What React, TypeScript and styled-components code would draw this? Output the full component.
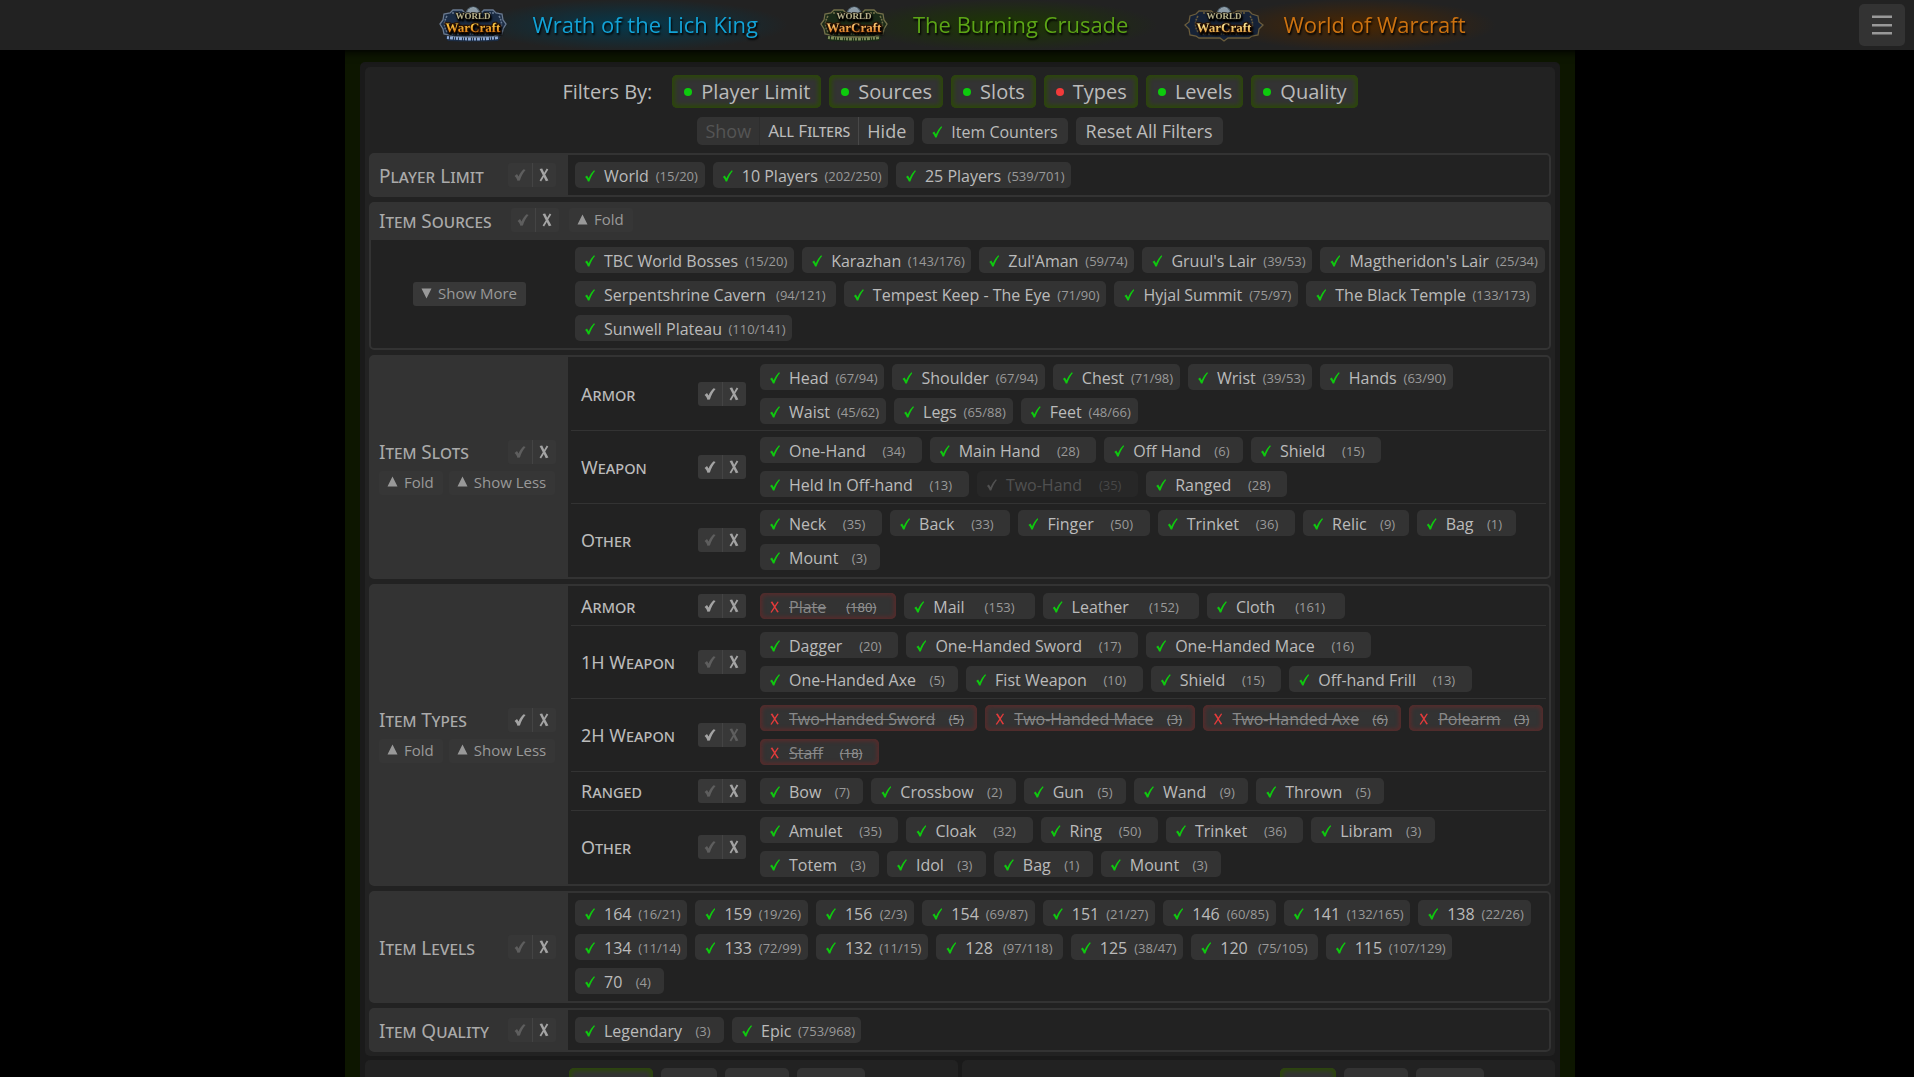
import React, { useState } from 'react';
import styled, { createGlobalStyle, css } from 'styled-components';

const GlobalStyle = createGlobalStyle`
  *, *::before, *::after { box-sizing: border-box; }
  body {
    margin: 0;
    background: #000;
    color: #bbb;
    font-family: "Open Sans", "Noto Sans", sans-serif;
    font-size: 16px;
    line-height: 24px;
  }
  button { font: inherit; color: inherit; border: 0; cursor: pointer; }
`;

const Page = styled.div`
  height: 100vh;
  overflow: auto;
  scrollbar-width: none;
`;

/* ---------- top bar ---------- */

const TopBar = styled.header`
  position: sticky;
  top: 0;
  z-index: 2;
  display: flex;
  align-items: center;
  height: 50px;
  padding-right: 9px;
  background: #222;
  box-shadow: 0 2px 8px #000;
`;

const Games = styled.nav`
  flex: 1;
  display: flex;
  justify-content: center;
  gap: 26px;
  padding-left: 70px;
`;

const GameLink = styled.a<{ $color: string; $glow: string }>`
  display: flex;
  align-items: center;
  gap: 19px;
  height: 50px;
  padding: 0 30px 2px 0;
  color: ${p => p.$color};
  font-size: 22px;
  line-height: 48px;
  text-decoration: none;
  text-shadow: 1px 2px 2px #000;
  white-space: nowrap;
  background: radial-gradient(ellipse 44% 52% at 56% 50%, ${p => p.$glow} 0%, transparent 100%);
`;

const MenuButton = styled.button`
  display: grid;
  place-items: center;
  width: 46px;
  height: 42px;
  padding: 0;
  border-radius: 5px;
  background: #333;
  color: #999;
`;

/* ---------- page body ---------- */

const Stage = styled.div`
  padding-left: 6px;
`;

const Backdrop = styled.main`
  max-width: 1230px;
  margin: 0 auto;
  padding: 12px 15px 0;
  background: #0d1600;
`;

const Sheet = styled.div`
  display: flex;
  flex-direction: column;
  gap: 4px;
  padding: 5px;
  border-radius: 5px 5px 0 0;
  background: #1a1a1a;
`;

const Card = styled.section`
  display: flex;
  flex-direction: column;
  gap: 5px;
  padding: 8px 4px 4px;
  border-radius: 5px;
  background: #222;
`;

const FilterBar = styled.div`
  display: flex;
  justify-content: center;
  align-items: center;
  gap: 8px;
  font-size: 20px;
`;

const BarTitle = styled.span`
  padding-right: 12px;
`;

const glow = css<{ $lit?: boolean }>`
  box-shadow: ${p => (p.$lit ? 'inset 0 0 4px 3px #2c470a' : 'none')};
`;

const FilterButton = styled.button<{ $lit?: boolean }>`
  display: flex;
  align-items: center;
  gap: 9px;
  height: 33px;
  padding: 0 11px 0 12px;
  border-radius: 5px;
  background: #333;
  ${glow}
`;

const Dot = styled.span<{ $on: boolean }>`
  width: 8px;
  height: 8px;
  border-radius: 50%;
  background: ${p => (p.$on ? '#0dcb0d' : '#f33a3a')};
`;

const ToolBar = styled(FilterBar)`
  padding: 4px 0 3px;
  font-size: 18px;
`;

const Segments = styled.div`
  display: flex;
  border-radius: 5px;
  background: #333;
  overflow: hidden;
`;

const Segment = styled.button`
  height: 28px;
  padding: 0 8px;
  background: none;
  &:disabled { color: #555; }
`;

const SegmentTitle = styled.span`
  padding: 0 8px;
  font-family: "Noto Sans", sans-serif;
  font-size: 17px;
  line-height: 28px;
  font-variant: small-caps;
  border-left: 1px solid #2d2d2d;
  border-right: 1px solid #484848;
`;

const PlainButton = styled.button`
  height: 28px;
  padding: 0 10px;
  border-radius: 5px;
  background: #333;
`;

/* ---------- filter groups ---------- */

const Group = styled.section<{ $stacked?: boolean }>`
  display: grid;
  grid-template-columns: ${p => (p.$stacked ? '1fr' : '197px 1fr')};
  border: 2px solid #333;
  border-radius: 5px;
`;

const Side = styled.div`
  display: flex;
  flex-direction: column;
  justify-content: center;
  gap: 7px;
  padding: 0 12px 0 8px;
  background: #333;
  color: #aaa;
`;

const SideTitle = styled.div`
  display: flex;
  align-items: center;
  justify-content: space-between;
`;

const Heading = styled.h2`
  margin: 0;
  padding-top: 1px;
  font-family: "Noto Sans", sans-serif;
  font-size: 19px;
  line-height: 22px;
  font-weight: 400;
  font-variant: small-caps;
  white-space: nowrap;
`;

const SideButtons = styled.div`
  display: flex;
  gap: 6px;
`;

const HeadStrip = styled.div`
  display: flex;
  align-items: center;
  gap: 10px;
  height: 36px;
  padding: 0 8px 4px;
  background: #333;
  color: #aaa;
`;

const HeadStripTitle = styled.div`
  display: flex;
  align-items: center;
  justify-content: space-between;
  width: 180px;
`;

const StackBody = styled.div`
  display: grid;
  grid-template-columns: 197px 1fr;
`;

const MoreCell = styled.div`
  display: grid;
  place-items: center;
`;

const FoldButton = styled.button<{ $raised?: boolean }>`
  display: flex;
  align-items: center;
  gap: 6px;
  height: 24px;
  padding: 0 9px 2px 8px;
  border-radius: 3px;
  background: ${p => (p.$raised ? '#383838' : '#363636')};
  color: #999;
  font-size: 15px;
  line-height: 22px;
  white-space: nowrap;
`;

const Pair = styled.div<{ $raised?: boolean }>`
  display: flex;
  height: 24px;
  border-radius: 3px;
  background: ${p => (p.$raised ? '#383838' : '#373737')};
`;

const PairButton = styled.button`
  display: grid;
  place-items: center;
  width: 24px;
  padding: 0;
  background: none;
  color: #a4a4a4;
  &:disabled { color: #5e5e5e; }
  & + & { box-shadow: inset 1px 0 #444; }
`;

const Chips = styled.div<{ $inset?: boolean }>`
  display: flex;
  flex-wrap: wrap;
  gap: 8px;
  padding: ${p => (p.$inset ? '7px 2px 7px 7px' : '0')};
`;

const Rows = styled.div`
  padding: 1px 3px;
`;

const Row = styled.div`
  display: grid;
  grid-template-columns: 117px 48px 1fr;
  align-items: center;
  padding: 6px 0 6px 10px;
  & + & { border-top: 1px solid #333; }
  > :last-child { padding-left: 14px; }
`;

const RowTitle = styled.h3`
  margin: 0;
  font-family: "Noto Sans", sans-serif;
  font-size: 18px;
  font-weight: 400;
  font-variant: small-caps;
  line-height: 22px;
`;

const ChipBox = styled.label<{ $off: boolean; $faded?: boolean; $end?: boolean }>`
  display: flex;
  align-items: center;
  height: 26px;
  padding-top: 2px;
  padding-left: 10px;
  padding-right: ${p => (p.$end ? '10px' : '0')};
  border-radius: 5px;
  background: #333;
  font-size: 16px;
  line-height: 24px;
  white-space: nowrap;
  opacity: ${p => (p.$faded ? 0.3 : 1)};
  ${p => p.$off && css`
    color: #888;
    text-decoration: line-through;
    box-shadow: inset 0 0 4px 2px #5a2a2a;
  `}
`;

const Tick = styled.input`
  appearance: none;
  flex: none;
  width: 10px;
  height: 12px;
  margin: 0 9px 0 0;
  background: #e23b3b;
  clip-path: path("M0.6 1 L2.4 0.6 L4.8 4.6 L7.6 0.4 L8.7 1 L5.5 5.9 L8.8 11 L7.2 11.6 L4.7 7.3 L1.6 11.8 L0.4 11.2 L3.9 6 Z");
  &:checked {
    background: #0fc80f;
    clip-path: path("M0 7 L2 5.6 L3.7 8.3 C5 5 7 2.2 9 0.2 L10 0.9 C7.6 3.8 5.9 7.2 4.4 11.6 L2.9 11.6 C2.3 9.6 1.3 8 0 7 Z");
  }
  &:checked:disabled { background: #bbb; }
`;

const Count = styled.span<{ $digits: number }>`
  min-width: ${p => 28 + p.$digits * 14}px;
  font-size: 13px;
  color: #999;
  text-align: center;
`;

const Lower = styled.div`
  display: grid;
  grid-template-columns: 1fr 1fr;
  gap: 4px;
`;

const LowerCard = styled.section<{ $indent: number }>`
  display: flex;
  gap: 8px;
  padding: 8px 8px 8px ${p => p.$indent}px;
  border-radius: 5px;
  background: #222;
`;

const Tab = styled.button<{ $width: number; $lit?: boolean }>`
  width: ${p => p.$width}px;
  height: 28px;
  border-radius: 5px;
  background: #333;
  ${glow}
`;

/* ---------- drawings ---------- */

const CheckIcon = () => (
  <svg width="12" height="12" viewBox="0 0 12 12" fill="currentColor">
    <path d="M0.6 6.9 L3 5.1 L4.6 7.4 C5.8 4.5 7.6 2 9.6 0.2 L11.6 1 C9 3.9 7.2 7.4 5.9 11.5 L3.4 11.8 C2.9 9.6 1.9 8 0.6 6.9 Z" />
  </svg>
);

const CrossIcon = () => (
  <svg width="10" height="14" viewBox="0 0 10 14" fill="currentColor">
    <path d="M0.6 1.1 L3.2 0.6 L5.2 4.8 L7.7 0.5 L9.3 1.4 L6.2 6.5 L9.4 12.6 L6.8 13.2 L4.8 9 L2.1 13.5 L0.6 12.6 L3.8 7.2 Z" />
  </svg>
);

const Triangle = ({ down }: { down?: boolean }) => (
  <svg width="11" height="11" viewBox="0 0 11 11" fill="currentColor">
    <path d={down ? 'M0.5 0.5 H10.5 L5.5 10.5 Z' : 'M0.5 10.5 H10.5 L5.5 0.5 Z'} />
  </svg>
);

const BarsIcon = () => (
  <svg width="20" height="20" viewBox="0 0 20 20" fill="currentColor">
    <path d="M0 0.5h20v2.5H0zM0 9h20v2.5H0zM0 17h20v2.5H0z" />
  </svg>
);

type LogoProps = { id: string; rim: string; plate: string; top: string; bottom: string; caption?: string; wide?: boolean };

const Logo = ({ id, rim, plate, top, bottom, caption, wide }: LogoProps) => (
  <svg width="80" height="36" viewBox="0 0 80 36" aria-hidden="true">
    <defs>
      <linearGradient id={id} x1="0" y1="0" x2="0" y2="1">
        <stop offset="0.25" stopColor={top} />
        <stop offset="0.85" stopColor={bottom} />
      </linearGradient>
    </defs>
    <circle cx="40" cy="8" r="7.5" fill="#51626f" />
    <path d="M35 4q5-5 9-1l-2 4-5 1z" fill="#a9b8c2" />
    <path
      d={wide
        ? 'M1 19l4-3 1-6 6-2 3-3h12l3 2h20l3-2h12l3 3 6 2 1 6 4 3-4 4-1 6-6 1-3 2H44l-4 3-4-3H15l-3-2-6-1-1-6z'
        : 'M7 18l3-4 1-6 6-1 3-3h9l3 3h16l3-3h9l3 3 6 1 1 6 3 4-3 5-1 5-6 1-3 2H20l-3-2-6-1-1-5z'}
      fill={plate}
      stroke={rim}
      strokeWidth="1.3"
    />
    <path
      d="M14 10q-5 8 0 16M66 10q5 8 0 16M19 7h8M53 7h8M18 28h44"
      fill="none"
      stroke={rim}
      strokeWidth="1.6"
      strokeDasharray="2 1"
    />
    <path d="M34 7a6 5 0 0 1 12 0z" fill="#8b9aa5" />
    <text x="40" y="13" textAnchor="middle" fontFamily="Liberation Serif, serif" fontWeight="700" fontSize="9" fill="#b9b48e" stroke="#1a1710" strokeWidth="1.4" paintOrder="stroke">WORLD</text>
    <text x="40" y="26" textAnchor="middle" fontFamily="Liberation Serif, serif" fontWeight="700" fontSize="13" textRendering="geometricPrecision" fill={`url(#${id})`} stroke="#2a1204" strokeWidth="2.4" paintOrder="stroke">WarCraft</text>
    {caption && (
      <>
        <path d="M12 30q28 5 56 0l-3 5q-25 1-50 0z" fill={plate} />
        <path d="M14 31.5q26 3 52 0" fill="none" stroke={caption} strokeWidth="3" strokeDasharray="2 1 3 1 1 1" />
      </>
    )}
  </svg>
);

/* ---------- parts ---------- */

type Item = { name: string; count?: string; off?: boolean; faded?: boolean };

/* "Name|count", with a leading "-" for an excluded item and "~" for an unavailable one */
const list = (text: string): Item[] =>
  text.split(';').map(entry => {
    const [label, count] = entry.split('|');
    return { name: label.replace(/^[-~]/, ''), count, off: label[0] === '-', faded: label[0] === '~' };
  });

const Chip = ({ name, count, off, faded }: Item) => {
  const [on, setOn] = useState(!off);
  const digits = count ? count.split('/').pop()!.length : 0;
  return (
    <ChipBox $off={!on} $faded={faded} $end={!count}>
      <Tick type="checkbox" checked={on} disabled={faded} onChange={e => setOn(e.target.checked)} />
      {name}
      {count && <Count $digits={digits}>({count})</Count>}
    </ChipBox>
  );
};

const ChipList = ({ items, inset }: { items: string; inset?: boolean }) => (
  <Chips $inset={inset}>
    {list(items).map(item => <Chip key={item.name} {...item} />)}
  </Chips>
);

type PairProps = { all?: boolean; none?: boolean; raised?: boolean };

const CheckPair = ({ all = false, none = true, raised }: PairProps) => (
  <Pair $raised={raised}>
    <PairButton disabled={!all}><CheckIcon /></PairButton>
    <PairButton disabled={!none}><CrossIcon /></PairButton>
  </Pair>
);

const SidePanel = ({ title, all, foldable }: { title: string; all?: boolean; foldable?: boolean }) => (
  <Side>
    <SideTitle>
      <Heading>{title}</Heading>
      <CheckPair all={all} />
    </SideTitle>
    {foldable && (
      <SideButtons>
        <FoldButton><Triangle />Fold</FoldButton>
        <FoldButton><Triangle />Show Less</FoldButton>
      </SideButtons>
    )}
  </Side>
);

type RowData = { title: string; items: string; all?: boolean; none?: boolean };

const RowList = ({ rows }: { rows: RowData[] }) => (
  <Rows>
    {rows.map(r => (
      <Row key={r.title}>
        <RowTitle>{r.title}</RowTitle>
        <CheckPair raised all={r.all} none={r.none} />
        <ChipList items={r.items} />
      </Row>
    ))}
  </Rows>
);

const slotRows: RowData[] = [
  { title: 'Armor', all: true, items: 'Head|67/94;Shoulder|67/94;Chest|71/98;Wrist|39/53;Hands|63/90;Waist|45/62;Legs|65/88;Feet|48/66' },
  { title: 'Weapon', all: true, items: 'One-Hand|34;Main Hand|28;Off Hand|6;Shield|15;Held In Off-hand|13;~Two-Hand|35;Ranged|28' },
  { title: 'Other', items: 'Neck|35;Back|33;Finger|50;Trinket|36;Relic|9;Bag|1;Mount|3' },
];

const typeRows: RowData[] = [
  { title: 'Armor', all: true, items: '-Plate|180;Mail|153;Leather|152;Cloth|161' },
  { title: '1H Weapon', items: 'Dagger|20;One-Handed Sword|17;One-Handed Mace|16;One-Handed Axe|5;Fist Weapon|10;Shield|15;Off-hand Frill|13' },
  { title: '2H Weapon', all: true, none: false, items: '-Two-Handed Sword|5;-Two-Handed Mace|3;-Two-Handed Axe|6;-Polearm|3;-Staff|18' },
  { title: 'Ranged', items: 'Bow|7;Crossbow|2;Gun|5;Wand|9;Thrown|5' },
  { title: 'Other', items: 'Amulet|35;Cloak|32;Ring|50;Trinket|36;Libram|3;Totem|3;Idol|3;Bag|1;Mount|3' },
];

const sources =
  "TBC World Bosses|15/20;Karazhan|143/176;Zul'Aman|59/74;Gruul's Lair|39/53;Magtheridon's Lair|25/34;Serpentshrine Cavern|94/121;Tempest Keep - The Eye|71/90;Hyjal Summit|75/97;The Black Temple|133/173;Sunwell Plateau|110/141";

const levels =
  '164|16/21;159|19/26;156|2/3;154|69/87;151|21/27;146|60/85;141|132/165;138|22/26;134|11/14;133|72/99;132|11/15;128|97/118;125|38/47;120|75/105;115|107/129;70|4';

const filters = ['Player Limit', 'Sources', 'Slots', 'Types', 'Levels', 'Quality'];

export default function App() {
  return (
    <Page>
      <GlobalStyle />
      <TopBar>
        <Games>
          <GameLink href="#wotlk" $color="#12a2d6" $glow="#04384c">
            <Logo id="gold-a" rim="#6a7a90" plate="#1b2c44" top="#ffd24a" bottom="#d9740e" caption="#8fa9d4" />
            Wrath of the Lich King
          </GameLink>
          <GameLink href="#tbc" $color="#5ca516" $glow="#1c3800">
            <Logo id="gold-b" rim="#73704a" plate="#1a2a18" top="#ffd27a" bottom="#d9741e" caption="#7c8a58" />
            The Burning Crusade
          </GameLink>
          <GameLink href="#wow" $color="#cc7210" $glow="#4a2600">
            <Logo id="gold-c" rim="#6a5c3c" plate="#162236" top="#fff0a0" bottom="#e09a3c" wide />
            World of Warcraft
          </GameLink>
        </Games>
        <MenuButton><BarsIcon /></MenuButton>
      </TopBar>

      <Stage>
        <Backdrop>
          <Sheet>
            <Card>
              <FilterBar>
                <BarTitle>Filters By:</BarTitle>
                {filters.map(name => (
                  <FilterButton key={name} $lit>
                    <Dot $on={name !== 'Types'} />
                    {name}
                  </FilterButton>
                ))}
              </FilterBar>
              <ToolBar>
                <Segments>
                  <Segment disabled>Show</Segment>
                  <SegmentTitle>All Filters</SegmentTitle>
                  <Segment>Hide</Segment>
                </Segments>
                <Chip name="Item Counters" />
                <PlainButton>Reset All Filters</PlainButton>
              </ToolBar>

              <Group>
                <SidePanel title="Player Limit" />
                <ChipList inset items="World|15/20;10 Players|202/250;25 Players|539/701" />
              </Group>

              <Group $stacked>
                <HeadStrip>
                  <HeadStripTitle>
                    <Heading>Item Sources</Heading>
                    <CheckPair />
                  </HeadStripTitle>
                  <FoldButton><Triangle />Fold</FoldButton>
                </HeadStrip>
                <StackBody>
                  <MoreCell>
                    <FoldButton $raised><Triangle down />Show More</FoldButton>
                  </MoreCell>
                  <ChipList inset items={sources} />
                </StackBody>
              </Group>

              <Group>
                <SidePanel title="Item Slots" foldable />
                <RowList rows={slotRows} />
              </Group>

              <Group>
                <SidePanel title="Item Types" all foldable />
                <RowList rows={typeRows} />
              </Group>

              <Group>
                <SidePanel title="Item Levels" />
                <ChipList inset items={levels} />
              </Group>

              <Group>
                <SidePanel title="Item Quality" />
                <ChipList inset items="Legendary|3;Epic|753/968" />
              </Group>
            </Card>

            <Lower>
              <LowerCard $indent={204}>
                <Tab $width={84} $lit />
                <Tab $width={56} />
                <Tab $width={64} />
                <Tab $width={68} />
              </LowerCard>
              <LowerCard $indent={318}>
                <Tab $width={56} $lit />
                <Tab $width={64} />
                <Tab $width={68} />
              </LowerCard>
            </Lower>
          </Sheet>
        </Backdrop>
      </Stage>
    </Page>
  );
}
